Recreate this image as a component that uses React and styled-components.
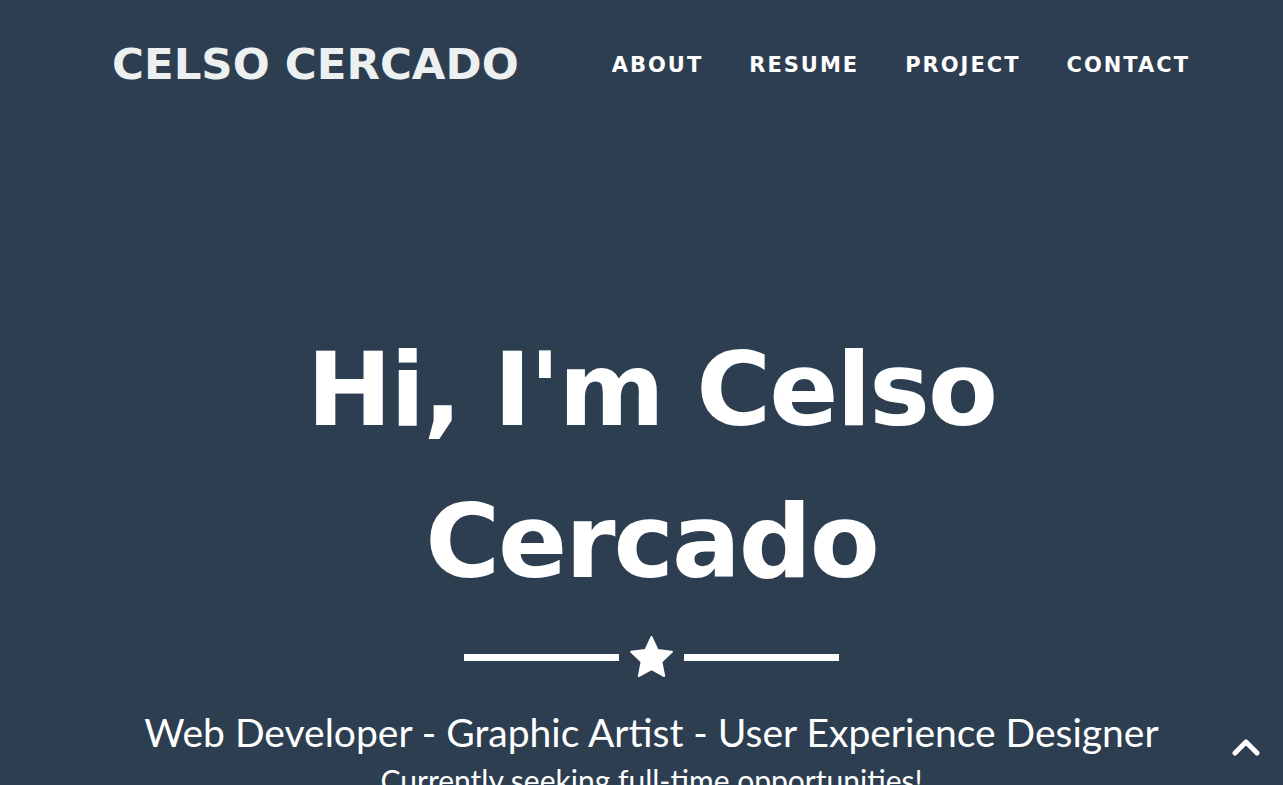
import React from 'react';
import styled, { createGlobalStyle } from 'styled-components';

const GlobalStyle = createGlobalStyle`
    html, body {
        margin: 0;
        padding: 0;
        background: #2c3e50;
        overflow: hidden;
    }
    * {
        box-sizing: border-box;
    }
`;

const PageStyled = styled.div`
    min-height: 100vh;
    background: #2c3e50;
    color: #fff;
`;

const NavBar = styled.nav`
    display: flex;
    align-items: center;
    justify-content: space-between;
    padding: 38px 93px 0 112px;
    height: 92px;
`;

const Brand = styled.a`
    font-family: "DejaVu Sans", sans-serif;
    font-weight: 700;
    font-size: 43.5px;
    color: #ecf0f1;
    text-decoration: none;
    line-height: 1;
`;

const NavList = styled.ul`
    display: flex;
    gap: 46px;
    list-style: none;
    margin: 0;
    padding: 0;
`;

const NavLink = styled.a`
    font-family: "DejaVu Sans", sans-serif;
    font-weight: 700;
    font-size: 21px;
    letter-spacing: 2px;
    color: #fff;
    text-decoration: none;
`;

const Hero = styled.header`
    display: flex;
    flex-direction: column;
    align-items: center;
    text-align: center;
    padding: 222px 0 0 20px;
`;

const Title = styled.h1`
    font-family: "DejaVu Sans", sans-serif;
    font-weight: 700;
    font-size: 102px;
    line-height: 152px;
    letter-spacing: -2px;
    margin: 0;
    max-width: 760px;
`;

const Divider = styled.div`
    display: flex;
    align-items: center;
    gap: 11px;
    margin: 18px 0 34px;
`;

const Line = styled.span`
    display: block;
    width: 155px;
    height: 7px;
    margin-top: 1px;
    background: #fff;
`;

const Skills = styled.p`
    font-family: Lato, sans-serif;
    font-weight: 400;
    font-size: 39px;
    line-height: 1.1;
    margin: 0;
`;

const Seeking = styled.p`
    font-family: Lato, sans-serif;
    font-size: 30px;
    line-height: 1.2;
    margin: 8px 0 0;
`;

const ScrollTop = styled.a`
    position: fixed;
    right: 22px;
    bottom: 27px;
    width: 30px;
    height: 22px;
    display: flex;
    align-items: center;
    justify-content: center;
    color: #fff;
`;

const Star = () => (
    <svg width="43" height="41" viewBox="1.2 1.1 21.6 20.7" fill="#fff">
        <path d="M12 1.6l3.1 6.6 7.2.9-5.3 5 1.4 7.2L12 17.8l-6.4 3.5L7 14.1l-5.3-5 7.2-.9z" strokeLinejoin="round" stroke="#fff" strokeWidth="1" />
    </svg>
);

const Chevron = () => (
    <svg width="28" height="20" viewBox="0 0 28 20" fill="none">
        <path d="M3 16L14 5l11 11" stroke="#fff" strokeWidth="5" strokeLinecap="round" strokeLinejoin="round" />
    </svg>
);

function App() {
    return (
        <PageStyled>
            <GlobalStyle />
            <NavBar>
                <Brand href="#top">CELSO CERCADO</Brand>
                <NavList>
                    <li><NavLink href="#about">ABOUT</NavLink></li>
                    <li><NavLink href="#resume">RESUME</NavLink></li>
                    <li><NavLink href="#project">PROJECT</NavLink></li>
                    <li><NavLink href="#contact">CONTACT</NavLink></li>
                </NavList>
            </NavBar>
            <Hero>
                <Title>Hi, I'm Celso Cercado</Title>
                <Divider>
                    <Line />
                    <Star />
                    <Line />
                </Divider>
                <Skills>Web Developer - Graphic Artist - User Experience Designer</Skills>
                <Seeking>Currently seeking full-time opportunities!</Seeking>
            </Hero>
            <ScrollTop href="#top">
                <Chevron />
            </ScrollTop>
        </PageStyled>
    );
}

export default App;
